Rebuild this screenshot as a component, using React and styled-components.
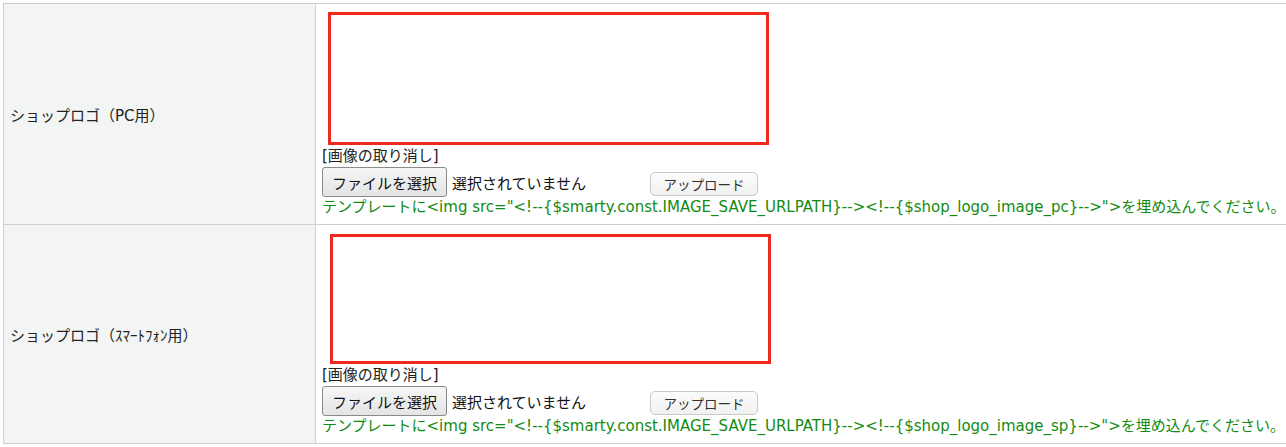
import React from "react";
import styled, { createGlobalStyle } from "styled-components";

const Global = createGlobalStyle`
  html, body { margin: 0; padding: 0; background: #fff; overflow: hidden; }
  body { font-family: "DejaVu Sans", "Noto Sans CJK JP", sans-serif; color: #222; }
`;

const Page = styled.div`
  padding: 3px 0 0 3px;
  width: 1500px;
`;

const Table = styled.table`
  border-collapse: collapse;
  width: 1480px;
  table-layout: fixed;
`;

const Row = styled.tr``;

const Label = styled.th`
  width: 312px;
  box-sizing: border-box;
  background: #f3f4f4;
  border: 1px solid #cfcfcf;
  text-align: left;
  font-weight: normal;
  font-size: 15px;
  color: #222;
  padding: 0 6px;
  vertical-align: middle;
`;

const Cell = styled.td`
  border: 1px solid #cfcfcf;
  padding: ${(p) => p.$top}px 5px 7px 6px;
  vertical-align: top;
`;

const Preview = styled.div`
  width: 435px;
  height: ${(p) => p.$h}px;
  border: 3px solid #ee2a1f;
  margin-left: ${(p) => p.$shift}px;
  background: #fff;
`;

const CancelLine = styled.div`
  font-size: 15px;
  line-height: 20px;
  height: 20px;
  color: #222;
  margin-top: 1px;
`;

const FileRow = styled.div`
  display: flex;
  align-items: flex-start;
  height: 31px;
`;

const FileInput = styled.div`
  display: flex;
  align-items: center;
  width: 328px;
  height: 31px;
  padding-top: 1px;
  box-sizing: border-box;
`;

const ChooseButton = styled.div`
  box-sizing: border-box;
  height: 30px;
  padding: 0 9px;
  display: flex;
  align-items: center;
  font-size: 15px;
  color: #111;
  background: linear-gradient(#f6f6f6, #e4e4e4);
  border: 1px solid #8a8a8a;
  border-radius: 3px;
`;

const NoFile = styled.span`
  font-size: 15px;
  margin-left: 5px;
  color: #111;
`;

const UploadButton = styled.div`
  box-sizing: border-box;
  margin-top: 6px;
  height: 24px;
  width: 108px;
  display: flex;
  align-items: center;
  justify-content: center;
  font-size: 13.5px;
  color: #333;
  background: linear-gradient(#fcfcfc, #f1f1f1);
  border: 1px solid #c8c8c8;
  border-radius: 5px;
`;

const Note = styled.div`
  font-size: 15px;
  line-height: 20px;
  color: #138b13;
  white-space: nowrap;
`;

const rows = [
  { label: "ショップロゴ（PC用）", key: "pc", top: 8, h: 127, shift: 6 },
  { label: "ショップロゴ（ｽﾏｰﾄﾌｫﾝ用）", key: "sp", top: 9, h: 124, shift: 8 },
];

export default function App() {
  return (
    <>
      <Global />
      <Page>
        <Table>
          <tbody>
            {rows.map((r) => (
              <Row key={r.key}>
                <Label>{r.label}</Label>
                <Cell $top={r.top}>
                  <Preview $h={r.h} $shift={r.shift} />
                  <CancelLine>[画像の取り消し]</CancelLine>
                  <FileRow>
                    <FileInput>
                      <ChooseButton>ファイルを選択</ChooseButton>
                      <NoFile>選択されていません</NoFile>
                    </FileInput>
                    <UploadButton>アップロード</UploadButton>
                  </FileRow>
                  <Note>
                    {`テンプレートに<img src="<!--{$smarty.const.IMAGE_SAVE_URLPATH}--><!--{$shop_logo_image_${r.key}}-->">を埋め込んでください。`}
                  </Note>
                </Cell>
              </Row>
            ))}
          </tbody>
        </Table>
      </Page>
    </>
  );
}
